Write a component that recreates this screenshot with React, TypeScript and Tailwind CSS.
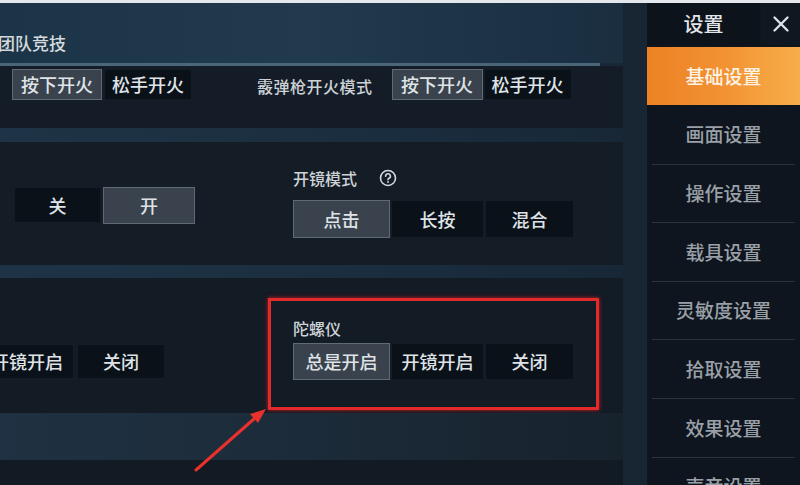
import { X } from "lucide-react";

const font = { fontFamily: '"Noto Sans CJK SC", "Noto Sans", sans-serif' };

function Btn({ label, active, w, h }: { label: string; active?: boolean; w: string; h: string }) {
  return (
    <div
      className={`${w} ${h} flex items-center justify-center text-[18px] font-medium ${
        active
          ? "bg-[#3a434d] border border-[#5f6a74] text-[#dfe3e7]"
          : "bg-[#0b1118] border border-[#141c25] text-[#dfe3e7]"
      }`}
    >
      {label}
    </div>
  );
}

const MENU = ["画面设置", "操作设置", "载具设置", "灵敏度设置", "拾取设置", "效果设置", "声音设置"];

export default function App() {
  return (
    <div
      style={font}
      className="relative w-[800px] h-[485px] overflow-hidden bg-gradient-to-r from-[#1e3446] via-[#1a2d3e] to-[#152331]"
    >
      <div className="h-[3px] bg-[#e4e8ec]" />
      <div className="flex h-[482px]">
        {/* 主区域 */}
        <div className="w-[623px] flex flex-col">
          <div className="h-[60px] shrink-0 flex items-end pb-[8px] bg-gradient-to-r from-[#1c3447] via-[#213a4e] to-[#1a2e40]">
            <span className="-ml-[2px] text-[17px] font-medium text-[#d4dade]">团队竞技</span>
          </div>
          <div className="h-[3px] shrink-0 w-[600px] bg-[#4a6679]" />

          {/* 开火模式 */}
          <div className="h-[62px] shrink-0 bg-[#141d27] flex items-start pt-[3px]">
            <div className="ml-[12px] flex gap-[2px]">
              <Btn label="按下开火" active w="w-[90px]" h="h-[31px]" />
              <Btn label="松手开火" w="w-[88px]" h="h-[31px]" />
            </div>
            <span className="ml-[65px] mt-[5px] text-[16px] font-medium tracking-[0.5px] text-[#cdd2d6]">霰弹枪开火模式</span>
            <div className="ml-[19px] flex gap-[1px]">
              <Btn label="按下开火" active w="w-[91px]" h="h-[31px]" />
              <Btn label="松手开火" w="w-[88px]" h="h-[31px]" />
            </div>
          </div>
          <div className="h-[14px] shrink-0" />

          {/* 开镜 */}
          <div className="h-[123px] shrink-0 bg-[#141c26] flex">
            <div className="ml-[14px] mt-[45px] flex gap-[2px] h-[37px]">
              <Btn label="关" w="w-[87px]" h="h-[36px]" />
              <Btn label="开" active w="w-[92px]" h="h-[37px]" />
            </div>
            <div className="ml-[98px] mt-[26px] flex flex-col">
              <div className="flex items-center h-[20px]">
                <span className="text-[16px] font-medium text-[#cdd2d6]">开镜模式</span>
                <svg className="ml-[22px]" width="18" height="18" viewBox="0 0 18 18">
                  <circle cx="9" cy="9" r="7.5" fill="none" stroke="#d5d9dd" strokeWidth="1.6" />
                  <path d="M6.6 7.2a2.4 2.4 0 1 1 3.4 2.1c-.7.4-1 .8-1 1.5" fill="none" stroke="#d5d9dd" strokeWidth="1.6" strokeLinecap="round" />
                  <circle cx="9" cy="13" r="0.9" fill="#d5d9dd" />
                </svg>
              </div>
              <div className="mt-[12px] flex gap-[1px]">
                <Btn label="点击" active w="w-[97px]" h="h-[38px]" />
                <Btn label="长按" w="w-[93px]" h="h-[38px]" />
                <Btn label="混合" w="w-[89px]" h="h-[38px]" />
              </div>
            </div>
          </div>
          <div className="h-[13px] shrink-0" />

          {/* 陀螺仪 */}
          <div className="h-[135px] shrink-0 bg-[#131b25] flex">
            <div className="-ml-[20px] mt-[66px] flex gap-[3px] h-[35px]">
              <Btn label="开镜开启" w="w-[94px]" h="h-[35px]" />
              <Btn label="关闭" w="w-[88px]" h="h-[35px]" />
            </div>
            <div className="ml-[103px] mt-[20px] w-[331px] h-[112px] border-[3px] border-[#e32a2a] shadow-[0_0_4px_#c81e1e] pl-[22px] pt-[17px]">
              <div className="text-[16px] font-medium text-[#cdd2d6] leading-[20px]">陀螺仪</div>
              <div className="mt-[5px] flex gap-[1px]">
                <Btn label="总是开启" active w="w-[97px]" h="h-[37px]" />
                <Btn label="开镜开启" w="w-[93px]" h="h-[37px]" />
                <Btn label="关闭" w="w-[89px]" h="h-[37px]" />
              </div>
            </div>
          </div>
          <div className="h-[47px] shrink-0 bg-gradient-to-r from-[#1f3142] via-[#1c2b39] to-[#17222d]" />
          <div className="flex-1 bg-[#121a23]" />
        </div>

        <div className="w-[24px] bg-[#182532]" />

        {/* 侧边栏 */}
        <div className="w-[153px] flex flex-col bg-[#0e151e]">
          <div className="h-[42px] shrink-0 flex">
            <div className="w-[113px] flex items-center justify-center text-[20px] font-medium text-[#e2e5e8] bg-[#0c131b]">
              设置
            </div>
            <div className="flex-1 ml-[1px] flex items-center justify-center bg-[#0f1720]">
              <X size={26} strokeWidth={2.2} color="#dde1e5" />
            </div>
          </div>
          <div className="mt-[2px] h-[58px] shrink-0 flex items-center justify-center bg-gradient-to-r from-[#ec8224] via-[#f29232] to-[#f7ae4a] text-[19px] font-medium text-[#fdf2e4]">
            基础设置
          </div>
          {MENU.map((m, i) => (
            <div
              key={m}
              className={`h-[58.6px] shrink-0 flex items-center justify-center text-[19px] font-medium text-[#9aa0a7] ${
                i > 0 ? "border-t border-[#2a323c] mx-[5px]" : "mx-[5px]"
              }`}
            >
              {m}
            </div>
          ))}
        </div>
      </div>

      {/* 标注箭头 */}
      <svg className="absolute left-0 top-0 pointer-events-none" width="800" height="485">
        <line x1="196" y1="470" x2="255" y2="418" stroke="#e8302c" strokeWidth="3" strokeLinecap="round" />
        <polygon points="266,409 250,414 258,423" fill="#e8302c" />
      </svg>
    </div>
  );
}
